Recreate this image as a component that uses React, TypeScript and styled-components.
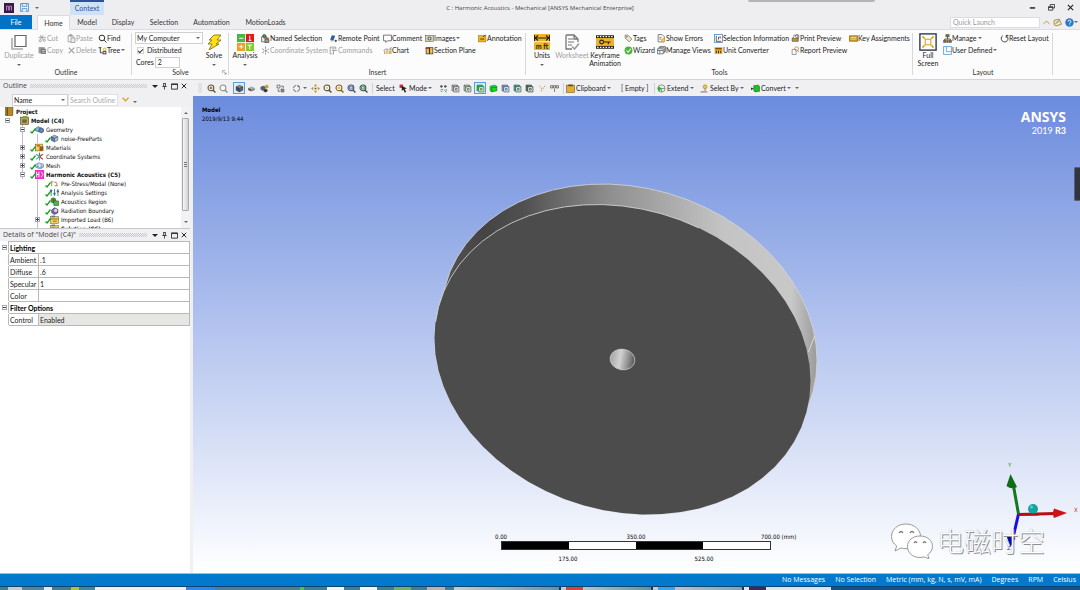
import React from "react";
import styled, { createGlobalStyle, css } from "styled-components";

const ui = `Lato, "Open Sans", sans-serif`;
const wide = `"Open Sans", "Noto Sans", sans-serif`;
const tahoma = `"DejaVu Sans Condensed", "Open Sans", sans-serif`;

const Global = createGlobalStyle`
  * { box-sizing: border-box; }
  body { margin: 0; background: #f0f0f3; font-family: ${ui}; font-size: 7px; line-height: 10px; color: #222; }
  button, input, select { font: inherit; color: inherit; margin: 0; padding: 0; border: 0; background: none; border-radius: 0; }
  table { border-collapse: collapse; }
`;

/* ---------- icons ---------- */

const gold = "#d9a520";
const cube = (top: string, left: string, right: string) => (
  <g stroke="#333" strokeWidth=".8">
    <path d="M2 5l6-3 6 3-6 3z" fill={top} />
    <path d="M2 5v6l6 3V8z" fill={left} />
    <path d="M14 5v6l-6 3V8z" fill={right} />
  </g>
);
const lens = (color: string, inner?: React.ReactNode) => (
  <g fill="none" stroke={color} strokeWidth="1.8">
    <circle cx="7" cy="7" r="5.2" fill="#fffbe8" />
    <path d="M11 11l4 4" strokeWidth="2.4" />
    {inner}
  </g>
);
const wire = (face: string, line = "#555") => (
  <g stroke={line} strokeWidth="1.4">
    <path d="M2 2h9v3H5v7H2z" fill={face} />
    <path d="M5 5h9v9H5z" fill="#fff" />
    <path d="M2 2l3 3M11 2l3 3M8 8h3v3H8z" fill="none" />
  </g>
);

const shapes: Record<string, React.ReactNode> = {
  duplicate: <g fill="none" stroke="#666"><path d="M1 4v11h11" stroke="#aaa" strokeWidth="1.6" /><path d="M4 1.5h11v11H4z" fill="#fff" strokeWidth="1.2" /></g>,
  cut: <g fill="none" stroke="#999" strokeWidth="1.5"><path d="M4 2l5 8M9 2L4 10M1 6h13" /><circle cx="4" cy="12" r="2" /><circle cx="11" cy="11" r="2" /></g>,
  copy: <g><rect x="1" y="2" width="11" height="11" fill="#999" /><path d="M5 5h9v9H5z" fill="#777" /><path d="M7 8h5M7 11h5" stroke="#fff" /></g>,
  paste: <g fill="none" stroke="#999" strokeWidth="1.5"><path d="M2 3h9v11H2zM5 1h3v3H5z" /><path d="M7 7h7v8H7z" fill="#eee" /></g>,
  del: <path d="M3 3l10 10M13 3L3 13" stroke="#999" strokeWidth="1.8" />,
  find: <g fill="none" stroke="#222" strokeWidth="1.7"><circle cx="7" cy="7" r="5" /><path d="M11 11l4 4" /></g>,
  tree: <g fill="none" stroke="#333" strokeWidth="1.6"><path d="M1 3h5M4 3v9h4" /><circle cx="12" cy="6" r="2.4" stroke={gold} /><rect x="9" y="10" width="5" height="4" /></g>,
  solve: <path d="M8 1h7l-4 5h4l-5 4h3L3 16l3-6H2l4-4H3z" fill="#ffe115" stroke="#8a7410" strokeWidth=".9" />,
  analysis: <g><rect width="7.6" height="7.6" fill="#49b648" /><rect x="8.4" width="7.6" height="7.6" fill="#e0191c" /><rect y="8.4" width="7.6" height="7.6" fill="#f0a01e" /><rect x="8.4" y="8.4" width="7.6" height="7.6" fill="#83cc2f" /><path d="M2 4h4M12 1.5v5M11 6h2.5M2 12h4M4 10v4M10 10.5h4M12 10.5v4" stroke="#fff" strokeWidth=".9" /></g>,
  named: <g stroke="#333" strokeWidth="1.1"><path d="M1 14V5l4-3 5 3v9z" fill="#e9efe9" /><circle cx="6" cy="4" r="3" fill="#3a9b48" /><path d="M7 8l7 2v5H7z" fill="#999" /><circle cx="12" cy="8" r="2" fill="#d33" stroke="none" /></g>,
  axes: <g stroke="#888" strokeWidth="1.6"><path d="M8 1v14M2 5l12 7M2 12l12-7" strokeDasharray="4 1.5" /></g>,
  axesColor: <g strokeWidth="2"><path d="M8 8V1" stroke="#2a9b35" /><path d="M8 8l6-4M8 8l6 5" stroke="#d22" /><path d="M8 8L2 4M8 8l-6 5M8 8v7" stroke="#4aa" /></g>,
  remote: <g><path d="M2 10L5 2l6 1-3 8z" fill="#2b5f9e" /><circle cx="12" cy="12" r="2" fill="#345" /><path d="M3 12h5" stroke="#345" /></g>,
  commands: <g fill="none" stroke="#999" strokeWidth="1.6"><path d="M2 2h10v4M2 2v12h4M5 5h5M5 8h3" /><path d="M8 8h6M8 8v7" /></g>,
  comment: <path d="M1 2h14v10H8l-3 3v-3H1z" fill="#fff" stroke="#555" strokeWidth="1.4" />,
  chart: <g><path d="M3 14V9M7 14V7M11 14V9M14 14V4" stroke="#c8963a" strokeWidth="2" /><path d="M1 8l5-3 4 2 5-5" fill="none" stroke="#555" strokeWidth="1.1" /></g>,
  images: <g><rect x="1" y="3" width="14" height="10" fill="#ddd1a0" stroke="#555" /><circle cx="8" cy="8" r="3.6" fill="#5f6b7c" /><circle cx="8" cy="8" r="1.6" fill="#dfe8f0" /></g>,
  section: <g><rect x="2" y="3" width="12" height="11" fill="#eac353" stroke="#333" strokeWidth="1.3" /><path d="M8 3v11" stroke="#333" strokeWidth="2" /><path d="M1 4h6" stroke="#c22" strokeWidth="2" /></g>,
  annotation: <g><rect x="1" y="3" width="13" height="11" fill="#f0b51c" stroke="#96700e" /><path d="M4 9h7M9 5l4-3" stroke="#333" strokeWidth="1.5" /></g>,
  units: <g><rect width="16" height="16" fill="#edb32c" /><path d="M1 4h14M4 1.500L1 4l3 2.500M12 1.500L15 4l-3 2.500M.5 1v6M15.500 1v6" fill="none" stroke="#2b2410" strokeWidth="1.100" /><path d="M0 7.800h16" stroke="#fff" strokeWidth=".8" /><text x="8" y="14.500" textAnchor="middle" fontSize="7" fontWeight="700" fill="#2b2410">m ft</text></g>,
  worksheet: <g fill="none" stroke="#777"><path d="M2 1h8l4 4v3M2 1v14h6M10 1v4h4" strokeWidth="1.3" /><path d="M4 5h5M4 8h6M4 11h4" strokeWidth="1.2" /><path d="M8 12.500l2.500 2.500L15 9.500" strokeWidth="1.6" stroke="#999" /></g>,
  keyframe: <g><rect y="2" width="16" height="12" fill="#2b2410" /><rect y="4.500" width="16" height="7" fill="#edb32c" /><path d="M1 3.200h14M1 12.800h14" stroke="#fff" strokeDasharray="1.300 1.200" strokeWidth="1" /><g fill="none" stroke="#2b2410" strokeWidth="1"><circle cx="5" cy="8" r="1.700" /><path d="M7 8h6M11 8v2" /></g></g>,
  tags: <g fill="#efe4c8" stroke="#666" strokeWidth="1.2"><path d="M2 2h5l7 7-5 5-7-7z" /><circle cx="5" cy="5" r="1" /></g>,
  wizard: <g><circle cx="8" cy="8" r="7" fill="#4db33f" /><path d="M4.500 8l3 3 4.500-6" fill="none" stroke="#fff" strokeWidth="1.800" /></g>,
  errors: <g fill="none" stroke="#555" strokeWidth="1.300"><path d="M2 1h7l4 4v9H2z" fill="#fff" /><path d="M4 6h4M4 9h3" /><circle cx="11" cy="11" r="3" fill="#f5c76b" stroke={gold} /></g>,
  views: <g fill="#fff" stroke="#555" strokeWidth="1.300"><path d="M5 1h10v9H5z" /><path d="M3 3h10v9H3z" /><path d="M1 5h10v9H1zM1 8h10M5 8v6" /></g>,
  info: <g><rect x="1" y="1" width="14" height="14" fill="#fff" stroke="#4d86c4" strokeWidth="1.400" /><path d="M4 3v10M4 13h9M8 5v5" stroke="#333" strokeWidth="1.400" /><circle cx="11" cy="6" r="1.800" fill="#d66" /></g>,
  converter: <g><rect x="1" y="2" width="14" height="12" fill="#edb32c" /><path d="M2 5h12M4 8v5M8 8v5M12 8v5" stroke="#4b3a08" strokeWidth="1.800" /></g>,
  print: <g><path d="M2 7h11v6H2z" fill="#b69349" stroke="#554116" /><path d="M5 7V2h7v5" fill="#fff" stroke="#555" /><circle cx="11" cy="4" r="3" fill="none" stroke="#333" /></g>,
  report: <g fill="none" stroke="#777" strokeWidth="1.300"><path d="M2 6h7v9H2z" fill="#fff" /><circle cx="10" cy="5" r="3.400" stroke="#b08030" /><path d="M12 8l2 3" /></g>,
  keys: <g><rect x="0" y="3" width="16" height="10" rx="1" fill="#c99a25" stroke="#6f5511" /><path d="M3 6h10M3 9h10" stroke="#f7e3a2" strokeWidth="1.500" /></g>,
  full: <g fill="none"><rect x=".8" y=".8" width="14.400" height="14.400" fill="#fff" stroke="#26334a" strokeWidth="1.200" /><rect x="5.500" y="5.500" width="5" height="5" stroke={gold} strokeWidth="1" /><path d="M5 5L3 3M11 5l2-2M5 11l-2 2M11 11l2 2" stroke={gold} strokeWidth="1.300" /></g>,
  manage: <g><path d="M8 5v4M3 12V9h10v3" stroke="#333" strokeWidth="1.400" fill="none" /><path d="M5 1h6v4H5zM1 11h4v4H1zM6.500 11h3v4h-3zM11 11h4v4h-4z" fill="#8a6a28" stroke="#333" strokeWidth=".8" /></g>,
  user: <g fill="#fff" stroke="#4b95d6" strokeWidth="1.400"><path d="M1 1h14v14H1z" /><path d="M6 1v9h9" /></g>,
  reset: <g fill="none" stroke="#333" strokeWidth="1.600"><path d="M5 3a6 6 0 1 0 6-.2" /><path d="M11 7V2.500h4" /></g>,
  zoomIn: lens("#5d5234", <path d="M4.500 7h5M7 4.500v5" />),
  zoomOut: lens("#8c8c8c"),
  zoomFit: lens("#4f4a30", <path d="M5 7h4" stroke={gold} />),
  zoomBox: lens("#7a6420", <path d="M4.500 7h5M7 4.500v5" stroke={gold} />),
  zoomBlue: lens("#3f5068", <path d="M4.500 5h5v4h-5z" stroke="#5577aa" />),
  zoomGreen: lens("#35564a", <path d="M4.500 5h5v4h-5z" stroke="#4a8a6a" />),
  cubeDark: cube("#7d868e", "#3f464c", "#5d656c"),
  cubeFlat: <g><path d="M2 7l6-2.500L14 7l-6 2.500z" fill="#aaa" /><path d="M2 7v3.500l6 3V9.500z" fill="#555" /><path d="M14 7v3.500l-6 3V9.500z" fill="#888" /></g>,
  cubes: <g><path d="M1 5l5-2 4 2v5l-5 2-4-2z" fill="#54606a" /><path d="M8 3l4-2 3 2v4l-4 1z" fill="#c79f36" /><path d="M7 10l5-1 2 3-4 3-4-2z" fill="#333" /></g>,
  boxes: <g fill="#fff" stroke="#555" strokeWidth="1.400"><path d="M2 2h5v5H2z" /><path d="M9 9h5v5H9z" fill="#999" /><path d="M9 4h4v3M4 9v4h3" fill="none" /></g>,
  rotate: <g fill="none" stroke="#555" strokeWidth="1.500"><circle cx="8" cy="8" r="5.500" strokeDasharray="7 1.800" /><path d="M12 2l2 3-4 0z" fill="#555" stroke="none" /></g>,
  pan: <g fill="#c49318"><path d="M8 0l3 4H5zM8 16l3-4H5zM0 8l4-3v6zM16 8l-4-3v6z" /><rect x="6.500" y="6.500" width="3" height="3" fill="#555" /></g>,
  arrow: <g><path d="M1 1h6v6H1z" fill="#d22" /><path d="M5 3l9 5-4 1 3 5-3 1-2-5-3 2z" fill="#222" /></g>,
  filter: <g fill="none" strokeWidth="1.500"><path d="M2 4h5M9 4h5M4 2v5M11 2v5" stroke="#333" /><path d="M3 10h4M3 13h3M9 10l4 5M13 9v3" stroke="#3a9b48" /></g>,
  wire: wire("#ddd"),
  wireGreen: wire("#cfeccf", "#4d604d"),
  wireSel: wire("#1ed12d", "#267a2c"),
  solidGreen: <g><path d="M2 4l8-2 4 2v8l-9 2-3-2z" fill="#13dd1c" stroke="#0b6d10" /><path d="M5 6h9M5 6v8" stroke="#0b6d10" /></g>,
  wireBlue: wire("#9cb7dd", "#3f5c80"),
  wireTeal: wire("#49b8a0", "#2c5e57"),
  wireDark: wire("#5b8a6a", "#2f4438"),
  probe: <g fill="none" stroke="#b89a52" strokeWidth="1.600" strokeDasharray="3 1.500"><path d="M2 3l4 4v6M13 3L9 7v4" /></g>,
  labels: <g fill="none" stroke="#6b6248" strokeWidth="1.500"><path d="M1 3h4v4H1zM6 3h4v4H6zM11 3h4v4h-4zM8 9v5" /></g>,
  clipboard: <g><rect x="1" y="2" width="14" height="13" fill="#e5ae33" stroke="#6d5112" /><rect x="4" y="1" width="8" height="3" fill="#5b4a22" /></g>,
  extend: <g><circle cx="8" cy="8" r="6.500" fill="#dff0df" stroke="#555" /><path d="M8 8L3 4a6.500 6.500 0 0 0 1 9z" fill="#1fb52a" /><path d="M8 8h6M8 8v6" stroke="#555" /></g>,
  selectBy: <g><circle cx="9" cy="5" r="3.500" fill="#f2c33c" stroke="#a07c18" /><path d="M9 8v4M1 14h12" stroke="#888" strokeWidth="2" /></g>,
  convert: <g><path d="M5 3l8-1 2 2v9l-8 1-2-2z" fill="#17c421" stroke="#0d5f12" /><path d="M0 6l5 2-5 3z" fill="#333" /></g>,
  save: <g fill="#eaf3fc" stroke="#3b87c9" strokeWidth="1.400"><path d="M1 1h14v14H1z" /><path d="M4 1h8v5H4zM4 15v-5h8v5" /></g>,
  logo: <g><rect width="16" height="16" fill="#3b1846" /><path d="M4 12V5h3v7M9 12V5h3v7" stroke="#c79ad2" strokeWidth="1.300" fill="none" /></g>,
  pin: <path d="M5 1h6M6 1v7M10 1v7M3 8h10M8 8v7" stroke="#222" strokeWidth="1.800" fill="none" />,
  max: <path d="M1 2h14v12H1zM1 3.500h14" stroke="#222" strokeWidth="2" fill="none" />,
  close: <path d="M2 2l12 12M14 2L2 14" stroke="#222" strokeWidth="2.600" />,
  min: <path d="M2 9h12" stroke="#222" strokeWidth="3.400" />,
  restore: <g fill="none" stroke="#333" strokeWidth="2"><path d="M5 5V1h10v8h-4" /><path d="M1 6h10v8H1zM1 8h10" /></g>,
  up: <path d="M1 11l7-6 7 6" stroke="#c4903a" strokeWidth="2.200" fill="none" />,
  down: <path d="M1 4l7 7 7-7" stroke={gold} strokeWidth="3" fill="none" />,
  note: <g><path d="M2 4l9-2 4 9-9 3-4-2z" fill="#f0e6c0" stroke="#9a7a28" strokeWidth="1.400" /><path d="M5 10l6-6" stroke="#555" strokeWidth="1.600" /></g>,
  help: <g><circle cx="8" cy="8" r="7.500" fill="#2577cf" /><path d="M5.500 6.500a2.500 2.500 0 1 1 3 2.300V10M8.500 11.500v1.500" stroke="#fff" strokeWidth="1.700" fill="none" /></g>,
  launcher: <path d="M2 10V2h8M7 7l6 6M13 8v5H8" stroke="#666" strokeWidth="1.800" fill="none" />,
  project: <g><rect x="1" y="1" width="13" height="14" fill="#b98a22" stroke="#5e430c" /><path d="M4 1v14" stroke="#5e430c" strokeWidth="2" /></g>,
  model: <g><rect x="1" y="2" width="14" height="13" fill="#b9a75a" stroke="#3d3718" /><path d="M4 6h8v6H4z" fill="#6a6450" /><path d="M5 1h7v3" stroke="#8aa840" strokeWidth="2" fill="none" /></g>,
  geometry: <g stroke="#2d4d74" strokeWidth="1.200"><path d="M1 6l5-3 4 2v5l-4 2-5-2z" fill="#8fb4d8" /><path d="M7 7l4-2 4 2v5l-4 2-4-2z" fill="#5d86b5" /></g>,
  part: cube("#8fb4d8", "#5b7fb4", "#a9c4e4"),
  materials: <g><rect x="1" y="2" width="12" height="12" fill="#f5d04c" stroke="#6d5112" /><path d="M8 6h7v8H8z" fill="#8a5a2a" /><path d="M3 5h6" stroke="#c33" strokeWidth="2" /></g>,
  mesh: <g fill="#d7e6f2" stroke="#48749c" strokeWidth="1.100"><path d="M1 6l6-3 8 3v5l-6 3-8-3zM1 8.500l8 3 6-3M5 4v8M11 5v8" /></g>,
  harmonic: <g><rect width="16" height="16" fill="#ee2cc8" /><path d="M3 3v10M7 3v10M3 8h4M11 3l3 5-3 5" stroke="#fff" strokeWidth="1.600" fill="none" /></g>,
  prestress: <path d="M1 5h5M3 5v8M8 6h3M8 12h6M12 6v6" stroke="#b78b5c" strokeWidth="1.800" fill="none" />,
  settings: <g strokeWidth="1.700"><path d="M2 2v12M8 2v12M14 2v12" stroke="#386" /><path d="M0 5h4M6 10h4M12 6h4" stroke="#36a" strokeWidth="3" /></g>,
  region: <g><circle cx="6" cy="6" r="5" fill="#3b9a3f" /><path d="M6 7h9v8H7z" fill="#48b84e" stroke="#174f1a" /><circle cx="6" cy="5" r="2" fill="#c33" /></g>,
  radiation: <g><path d="M3 7l5-4 6 3v6l-6 3-5-3z" fill="#73649c" stroke="#2f2850" /><circle cx="10" cy="8" r="3" fill="#d6cfe8" /></g>,
  load: <g><rect x="1" y="3" width="14" height="12" fill="#f2d568" stroke="#7a6118" /><path d="M1 7h14M5 11h7" stroke="#7a6118" strokeWidth="1.500" /><path d="M3 1h6v3H3z" fill="#57a" /></g>,
};

const Icon = ({ name, size = 9 }: { name: string; size?: number }) => (
  <svg width={size} height={size} viewBox="0 0 16 16" aria-hidden="true">{shapes[name]}</svg>
);

const Caret = styled.i<{ $big?: boolean }>`
  display: inline-block; flex: none;
  border: ${p => (p.$big ? 3 : 2)}px solid transparent;
  border-top-color: ${p => (p.$big ? "#222" : "#666")}; border-bottom: 0;
`;

/* ---------- title bar and tabs ---------- */

const Shell = styled.div`
  min-height: 100vh; display: flex; flex-direction: column; background: #f0f0f3; overflow: hidden;
  svg { flex: none; display: block; }
`;
const Title = styled.header`
  height: 15px; display: grid; grid-template-columns: 1fr auto 1fr; align-items: center; background: #eeeef1;
`;
const TitleLeft = styled.div`display: flex; align-items: center; align-self: stretch; gap: 6px; padding-left: 4px;`;
const ContextTab = styled.div`
  align-self: stretch; width: 34px; margin-left: 25px; border-top: 2px solid #2f5496;
  background: #cfe1f7; color: #2b579a; text-align: center; line-height: 13px;
`;
const TitleText = styled.h1`margin: 0; font: 400 6px/10px ${wide}; color: #444;`;
const TitleRight = styled.div`display: flex; justify-content: flex-end; gap: 12px; padding-right: 6px;`;
const Peek = styled.div`
  position: absolute; top: 0; right: 205px; width: 127px; height: 2px; background: #b4b4b6; border-radius: 0 0 2px 2px;
`;
const IconButton = styled.button`display: flex; align-items: center; justify-content: center;`;

const TabRow = styled.nav`height: 15px; display: flex; align-items: stretch; background: #eeeef1; border-bottom: 1px solid #dcdce0;`;
const Tab = styled.button<{ $w: number; $kind?: "file" | "active" }>`
  width: ${p => p.$w}px; color: #333; line-height: 14px;
  ${p => p.$kind === "file" && css`background: #0173c7; color: #fff; margin-right: 5px;`}
  ${p => p.$kind === "active" && css`background: #fcfcfc; border: 1px solid #dcdce0; border-bottom: 0; line-height: 13px; margin-bottom: -1px;`}
`;
const TabTools = styled.div`margin-left: auto; display: flex; align-items: center; gap: 3px; padding-right: 2px;`;
const Quick = styled.input`
  width: 90px; height: 11px; background: #fff; border: 1px solid #dcdce0; padding: 0 2px;
  &::placeholder { color: #999; opacity: 1; }
`;

/* ---------- ribbon ---------- */

const Ribbon = styled.section`height: 50px; display: flex; background: #fcfcfc; border-bottom: 1px solid #d4d4d8;`;
const GroupBox = styled.div<{ $w: number }>`
  width: ${p => p.$w}px; flex: none; display: flex; flex-direction: column; padding-top: 2px;
  background: linear-gradient(#d8d8dc, #d8d8dc) right 3px / 1px 42px no-repeat;
`;
const GroupBody = styled.div<{ $cols: string }>`height: 36px; display: grid; grid-template-columns: ${p => p.$cols}; align-items: start;`;
const GroupLabel = styled.div`position: relative; text-align: center; line-height: 9px; color: #333;`;
const Launcher = styled.button`position: absolute; right: 2px; top: 2px;`;
const Stack = styled.div`display: flex; flex-direction: column; align-items: flex-start;`;
const Small = styled.button`
  height: 12px; display: flex; align-items: center; white-space: nowrap; color: #222;
  &:disabled { color: #a0a0a0; }
  ${Caret} { margin-left: 1px; }
`;
const Big = styled.button`
  display: flex; flex-direction: column; align-items: center; justify-self: center; padding-top: 1px;
  line-height: 8px; white-space: nowrap; color: #222;
  &:disabled { color: #a0a0a0; }
  ${Caret} { margin-top: 5px; }
`;
const BigIcon = styled.span`height: 18px; display: flex; align-items: center;`;

type Item = [icon: string, text: string, drop?: boolean, off?: boolean];
const Items = ({ list }: { list: Item[] }) => (
  <Stack>
    {list.map(([icon, text, drop, off]) => (
      <Small key={text} disabled={off}><Icon name={icon} />{text}{drop && <Caret />}</Small>
    ))}
  </Stack>
);
const BigButton = ({ icon, size, lines, drop, off }: { icon: string; size: number; lines: string[]; drop?: boolean; off?: boolean }) => (
  <Big disabled={off}>
    <BigIcon><Icon name={icon} size={size} /></BigIcon>
    <span>{lines.map(l => <div key={l}>{l}</div>)}</span>
    {drop && <Caret />}
  </Big>
);
const Group = ({ w, cols, label, children, launcher }: { w: number; cols: string; label: string; children: React.ReactNode; launcher?: boolean }) => (
  <GroupBox $w={w}>
    <GroupBody $cols={cols}>{children}</GroupBody>
    <GroupLabel>{label}{launcher && <Launcher aria-label="More solve options"><Icon name="launcher" size={5} /></Launcher>}</GroupLabel>
  </GroupBox>
);

const SelectBox = styled.span<{ $w: number }>`
  width: ${p => p.$w}px; height: 12px; display: flex; align-items: center; padding-right: 2px;
  background: #fff; border: 1px solid #d0d0d4;
  select { flex: 1; appearance: none; padding-left: 1px; height: 10px; min-width: 0; line-height: 10px; }
`;
const Check = styled.label`
  height: 12px; display: flex; align-items: center; gap: 3px; padding-left: 2px;
  input { appearance: none; width: 7px; height: 7px; border: 1px solid #d4d4d8; background: #fff; display: grid; place-items: center; }
  input:checked::after { content: ""; width: 4px; height: 2px; border: solid #333; border-width: 0 0 1px 1px; transform: rotate(-45deg); }
`;
const Cores = styled.label`
  height: 12px; display: flex; align-items: center; gap: 1px; padding-left: 1px;
  input { width: 25px; height: 11px; border: 1px solid #d0d0d4; background: #fff; padding-left: 2px; }
`;

/* ---------- side panels ---------- */

const Body = styled.main`flex: 1; display: flex; min-height: 0;`;
const Side = styled.aside`width: 190px; flex: none; display: flex; flex-direction: column; margin-right: 3px; background: #fff;`;
const PanelHead = styled.div`
  height: 12px; display: flex; align-items: center; gap: 3px; padding: 0 3px; background: #f0f0f3; color: #444;
  h2 { margin: 0; font: 400 7px/10px ${wide}; }
`;
const Dots = styled.span`
  flex: 1; height: 4px; margin-right: 2px;
  background: conic-gradient(#c8c8ce 25%, transparent 0 50%, #c8c8ce 0 75%, transparent 0) 0 0 / 2px 2px;
`;
const HeadTools = styled.span`display: flex; align-items: center; gap: 3px;`;
const Filter = styled.div`
  height: 15px; display: flex; align-items: center; padding-left: 12px; background: #f0f0f3;
  input { width: 50px; height: 12px; background: #fff; border: 1px solid #e2e2e6; padding: 0 1px; margin-right: 4px; }
  input::placeholder { color: #aaa; opacity: 1; }
  > ${Caret} { margin: 5px 0 0 4px; }
`;
const TreeWrap = styled.div`height: 122px; display: flex; overflow: hidden; border-bottom: 1px solid #c8c8cc;`;
const TreeList = styled.ul`
  flex: 1; margin: 0; padding: 0; list-style: none; font: 6px/9px ${tahoma}; color: #111;
`;
const Row = styled.li<{ $bold?: boolean }>`
  height: 9px; display: flex; align-items: center; white-space: nowrap; font-weight: ${p => (p.$bold ? 700 : 400)};
`;
const Guide = styled.span<{ $line?: boolean }>`
  width: 15px; height: 9px; flex: none; display: grid; place-items: center;
  ${p => p.$line && css`background: linear-gradient(#c9b9c2, #c9b9c2) 7px 0 / 1px 9px no-repeat;`}
`;
const Expander = styled.button`
  width: 5px; height: 5px; border: 1px solid #a3a8b4; background: linear-gradient(#444, #444) center / 3px 1px no-repeat #fff;
`;
const Plus = styled(Expander)`
  background: linear-gradient(#444, #444) center / 3px 1px no-repeat, linear-gradient(#444, #444) center / 1px 3px no-repeat, #fff;
`;
const NodeIcon = styled.span`position: relative; width: 16px; height: 9px; flex: none; padding-left: 5px;`;
const Tick = styled.svg`position: absolute; left: 0; top: 3px;`;
const Scroll = styled.div`
  width: 9px; display: flex; flex-direction: column; align-items: center; background: #f2f2f4; padding: 5px 0;
`;
const Thumb = styled.div`
  width: 7px; height: 93px; margin: 4px 0 auto; display: grid; place-items: center;
  background: linear-gradient(90deg, #f6f6f6, #d2d2d6); border: 1px solid #a8a8ae; border-radius: 1px;
  &::after { content: ""; width: 3px; height: 5px; background: repeating-linear-gradient(#777 0 1px, transparent 1px 2px); }
`;
const UpCaret = styled(Caret)`transform: rotate(180deg);`;

const Props = styled.table`
  width: 100%; table-layout: fixed; background: #fff;
  td, th { height: 12px; padding: 0 0 0 1px; border: 1px solid #b9b9b9; font-weight: 400; text-align: left; line-height: 10px; }
  td:first-child { width: 8px; padding: 0; border-color: #fff #b9b9b9 #fff #fff; }
  th[scope="colgroup"] { font-weight: 700; color: #000; }
  ${Expander} { display: block; margin: auto; }
`;
const Cell = styled.td<{ $shade?: boolean }>`background: ${p => (p.$shade ? "#e6e6e3" : "#fff")};`;

const node = (level: number, icon: string, text: string, o: { box?: "+" | "-"; bold?: boolean; tick?: boolean; lines?: number[] } = {}) => ({ level, icon, text, ...o });
const nodes = [
  node(0, "model", "Model (C4)", { box: "-", bold: true }),
  node(1, "geometry", "Geometry", { box: "-", tick: true, lines: [1] }),
  node(2, "part", "noise-FreeParts", { tick: true, lines: [1, 2] }),
  node(1, "materials", "Materials", { box: "+", tick: true, lines: [1] }),
  node(1, "axesColor", "Coordinate Systems", { box: "+", tick: true, lines: [1] }),
  node(1, "mesh", "Mesh", { box: "+", tick: true, lines: [1] }),
  node(1, "harmonic", "Harmonic Acoustics (C5)", { box: "-", bold: true, tick: true, lines: [1] }),
  node(2, "prestress", "Pre-Stress/Modal (None)", { tick: true, lines: [2] }),
  node(2, "settings", "Analysis Settings", { tick: true, lines: [2] }),
  node(2, "region", "Acoustics Region", { tick: true, lines: [2] }),
  node(2, "radiation", "Radiation Boundary", { tick: true, lines: [2] }),
  node(2, "load", "Imported Load (B6)", { box: "+", tick: true, lines: [2] }),
  node(2, "load", "Solution (C6)", { bold: true, lines: [2] }),
];

const Head = ({ title }: { title: string }) => (
  <PanelHead>
    <h2>{title}</h2><Dots />
    <HeadTools>
      <IconButton aria-label="Panel menu"><Caret $big /></IconButton>
      <IconButton aria-label="Pin"><Icon name="pin" size={7} /></IconButton>
      <IconButton aria-label="Maximize"><Icon name="max" size={7} /></IconButton>
      <IconButton aria-label="Close"><Icon name="close" size={6} /></IconButton>
    </HeadTools>
  </PanelHead>
);

/* ---------- graphics area ---------- */

const Work = styled.section`flex: 1; min-width: 0; display: flex; flex-direction: column;`;
const Tools = styled.div`height: 16px; display: flex; align-items: center; padding-left: 5px; background: #f0f0f3;`;
const Grip = styled.span`
  width: 4px; height: 10px; margin-right: 3px;
  background: conic-gradient(#d2d2d8 25%, transparent 0 50%, #d2d2d8 0 75%, transparent 0) 0 0 / 2px 2px;
`;
const Tool = styled.button<{ $on?: boolean }>`
  width: 12px; height: 12px; display: grid; place-items: center;
  ${p => p.$on && css`border: 1px solid #5c9fdc; background: #dcebf8;`}
`;
const TextTool = styled.button<{ $w: number }>`
  width: ${p => p.$w}px; height: 12px; display: flex; align-items: center; gap: 1px; white-space: nowrap;
`;
const Gap = styled.span<{ $w: number; $rule?: boolean }>`
  width: ${p => p.$w}px; height: 11px; flex: none;
  ${p => p.$rule && css`background: linear-gradient(#d0d0d6, #d0d0d6) center / 1px 100% no-repeat;`}
`;
const View = styled.div`
  position: relative; flex: 1; overflow: hidden; background: linear-gradient(#6b8bdd, #b5c5ef 50%, #fff);
`;
const Scene = styled.svg`position: absolute; inset: 0; width: 100%; height: 100%;`;
const Stamp = styled.div`
  position: absolute; left: 9px; top: 9px; font: 6px/9px ${tahoma}; color: #000;
  b { display: block; }
`;
const Brand = styled.div`
  position: absolute; right: 14px; top: 13px; text-align: right; color: #fff; font: 9px/12px ${ui};
  strong { display: block; font: 700 14px/16px ${wide}; }
`;
const SideTab = styled.button`
  position: absolute; right: 0; top: 71px; width: 6px; height: 34px;
  background: #2f3542; border: 1px solid #59606e; border-right: 0; border-radius: 2px 0 0 2px;
`;
const Ruler = styled.div`
  position: absolute; right: 309px; bottom: 10px; width: 270px; font: 6px/9px ${tahoma}; color: #000;
`;
const Bar = styled.div`
  height: 9px; display: grid; grid-template-columns: repeat(4, 1fr); border: 1px solid #333; background: #fff;
  i:nth-child(odd) { background: #000; }
`;
const Marks = styled.div<{ $inset?: boolean }>`
  display: flex; justify-content: space-between; height: 9px; ${p => p.$inset && "margin: 4px 67px 0;"}
  span { width: 0; display: flex; justify-content: center; white-space: nowrap; }
  span:nth-child(3) { justify-content: flex-start; text-indent: -10px; }
`;
const TriadBox = styled.div`
  position: absolute; right: 0; bottom: 20px; width: 76px; height: 94px; font: 6px/8px ${tahoma};
`;
const Axis = styled.span<{ $c: string; $x: number; $y: number }>`
  position: absolute; left: ${p => p.$x}px; top: ${p => p.$y}px; color: ${p => p.$c};
`;
const Watermark = styled.div`
  position: absolute; right: 35px; bottom: 14px; display: flex; align-items: center; gap: 3px;
  color: #fff; font: 300 27px/36px "Noto Sans CJK SC", sans-serif; text-shadow: 1px 1px 0 #8f8f8f, 0 0 1px #aaa; white-space: nowrap;
`;

const W = 188, H = 155, R = 0.138, D = { x: 6.5, y: -20.5 }, C = { x: 622.5, y: 359.5 };
const rim = Array.from({ length: 60 }, (_, i) => {
  const t = (i / 60) * Math.PI * 2;
  const s = Math.sqrt(1 - R * R);
  return {
    x: C.x + W * Math.cos(t), y: C.y + H * (R * Math.cos(t) + s * Math.sin(t)),
    nx: H * (-R * Math.sin(t) + s * Math.cos(t)), ny: W * Math.sin(t),
  };
});
const pts = (a: { x: number; y: number }[]) => a.map(p => `${p.x.toFixed(1)},${p.y.toFixed(1)}`).join(" ");
const outline = rim.map(p => (p.nx * D.x + p.ny * D.y > 0 ? { x: p.x + D.x, y: p.y + D.y } : p));

const Disc = () => (
  <Scene viewBox="193 96 887 477" role="img" aria-label="Disc with a central hole">
    <defs>
      <linearGradient id="side" gradientUnits="userSpaceOnUse" x1="440" y1="0" x2="818" y2="0">
        <stop offset="0" stopColor="#555" /><stop offset=".12" stopColor="#444" /><stop offset=".22" stopColor="#505050" />
        <stop offset=".45" stopColor="#8f8f8f" /><stop offset=".75" stopColor="#c4c4c4" /><stop offset=".93" stopColor="#c8c8c8" /><stop offset="1" stopColor="#999" />
      </linearGradient>
      <linearGradient id="bore"><stop offset="0" stopColor="#a5a5a5" /><stop offset=".4" stopColor="#d2d2d2" /><stop offset=".75" stopColor="#8b8b8b" /><stop offset="1" stopColor="#555" /></linearGradient>
    </defs>
    <polygon points={pts(outline)} fill="url(#side)" stroke="#d5d5d5" strokeWidth=".8" />
    <path d="M808.500 352l6-16" stroke="#e4e4e4" strokeWidth=".8" />
    <polygon points={pts(rim)} fill="#4c4c4c" />
    <polyline points={pts(rim.slice(31, 50))} fill="none" stroke="#dedede" strokeWidth=".8" />
    <ellipse cx="622.500" cy="359.500" rx="12.500" ry="10.300" transform="rotate(10 622.5 359.5)" fill="url(#bore)" stroke="#ccc" strokeWidth=".7" />
  </Scene>
);

const Triad = () => (
  <TriadBox>
    <svg width="76" height="94" viewBox="1004 459 76 94">
      <path d="M1018.500 514l-6 26" stroke="#1111e0" strokeWidth="3" /><path d="M1006.500 536l9 2-5 9z" fill="#0b0ba0" />
      <path d="M1018.500 514l-5-28" stroke="#117a18" strokeWidth="3" /><path d="M1010.500 474l-4 12q5 4 10.500 1z" fill="#0e6d15" />
      <path d="M1018.500 514.500l37-1" stroke="#b80d10" strokeWidth="3" /><path d="M1054 508.500q-2 5 0 9.500l13-5z" fill="#cf1216" />
      <circle cx="1033" cy="509" r="5" fill="#12a3a3" /><circle cx="1031.500" cy="507" r="1.500" fill="#5cd0d0" />
      <path d="M1019 514.500h20" stroke="#b80d10" strokeWidth="2" />
    </svg>
    <Axis $c="#169c2c" $x={4} $y={2}>Y</Axis><Axis $c="#d23" $x={70} $y={47}>X</Axis><Axis $c="#22e" $x={3} $y={85}>Z</Axis>
  </TriadBox>
);

const Bubbles = () => (
  <svg width="44" height="36" viewBox="0 0 44 36">
    <g fill="#fff" stroke="#999" strokeWidth="1">
      <path d="M16 1C7.500 1 1.500 6.500 1.500 13.500c0 4 2 7.300 5.200 9.500L5 28l6-3q2.500.7 5 .7c8.500 0 14.500-5.500 14.500-12.200S24.500 1 16 1z" />
      <path d="M30 13c-7.500 0-12.500 4.500-12.500 10.500S22.500 34.500 30 34.500q2.300 0 4.300-.6l4.700 2-1.300-4.200c2.800-2 4.800-4.900 4.800-8.200C42.500 17.500 37.500 13 30 13z" />
    </g>
    <g fill="none" stroke="#777" strokeWidth="1.300"><path d="M9 10q2-3 4 0M20 10q2-3 4 0M24 20q1.500-2.500 3 0M33 20q1.500-2.500 3 0" /></g>
  </svg>
);

/* ---------- bottom bars ---------- */

const Status = styled.footer`
  height: 13px; display: flex; justify-content: flex-end; align-items: center; gap: 10px; padding-right: 4px;
  background: #0279cc; border-top: 1px solid #8cc6ee; color: #fff; font-family: ${wide};
`;
const Taskbar = styled.div`height: 4px; display: flex; background: #14518a; border-top: 1px solid #0d4470;`;
const Slot = styled.span<{ $w: number; $bg: string }>`width: ${p => p.$w}px; flex: none; background: ${p => p.$bg};`;
const slots: [number, string][] = [
  [8, "#3f7f94"], [14, "#c5ccd0"], [22, "#4c879d"], [8, "#dfe8ec"], [19, "#3f7f94"], [8, "#a4cc2c"], [16, "#3f87a4"],
  [91, "#f0efed"], [29, "#2a86f0"], [85, "#4a7f96"], [4, "#4fbf5a"], [23, "#3d7f98"], [17, "#f4f6f6"], [16, "#3d7f98"], [17, "#f4f6f6"],
  [17, "#3d7f98"], [17, "#6fb35e"], [16, "#3d7f98"], [18, "#b9b4b0"], [9, "#3d7f98"],
  [105, "linear-gradient(90deg, #c5cdd2, #5b93b0)"], [2, "#15395a"], [5, "#c5cdd2"], [17, "#d9433f"], [68, "linear-gradient(90deg, #b5c5cc, #5b93a0)"],
  [2, "#15395a"], [5, "#c5cdd2"], [17, "#35a4ee"], [67, "linear-gradient(90deg, #b5c5cc, #7ba3b8)"], [2, "#15395a"], [5, "#e5e5e5"], [17, "#43265a"], [65, "#dde3e8"],
];

export default function App() {
  return (
    <Shell>
      <Global />
      <Title>
        <TitleLeft>
          <Icon name="logo" size={10} />
          <IconButton aria-label="Save"><Icon name="save" size={9} /></IconButton>
          <IconButton aria-label="Customize"><Caret /></IconButton>
          <ContextTab>Context</ContextTab>
        </TitleLeft>
        <TitleText>C : Harmonic Acoustics - Mechanical [ANSYS Mechanical Enterprise]</TitleText>
        <TitleRight>
          <IconButton aria-label="Minimize"><Icon name="min" size={7} /></IconButton>
          <IconButton aria-label="Restore"><Icon name="restore" size={7} /></IconButton>
          <IconButton aria-label="Close window"><Icon name="close" size={7} /></IconButton>
        </TitleRight>
      </Title>
      <Peek />
      <TabRow>
        <Tab $w={32} $kind="file">File</Tab>
        <Tab $w={33} $kind="active">Home</Tab>
        <Tab $w={34}>Model</Tab>
        <Tab $w={38}>Display</Tab>
        <Tab $w={44}>Selection</Tab>
        <Tab $w={51}>Automation</Tab>
        <Tab $w={57}>MotionLoads</Tab>
        <TabTools>
          <Quick aria-label="Quick Launch" placeholder="Quick Launch" />
          <IconButton aria-label="Collapse ribbon"><Icon name="up" size={7} /></IconButton>
          <IconButton aria-label="Feedback"><Icon name="note" size={9} /></IconButton>
          <IconButton aria-label="Help"><Icon name="help" size={9} /><Caret /></IconButton>
        </TabTools>
      </TabRow>

      <Ribbon>
        <Group w={132} cols="38px 29px 31px 1fr" label="Outline">
          <BigButton icon="duplicate" size={16} lines={["Duplicate"]} drop off />
          <Items list={[["cut", "Cut", false, true], ["copy", "Copy", false, true]]} />
          <Items list={[["paste", "Paste", false, true], ["del", "Delete", false, true]]} />
          <Items list={[["find", "Find"], ["tree", "Tree", true]]} />
        </Group>
        <Group w={97} cols="3px 71px 16px 1fr" label="Solve" launcher>
          <span />
          <Stack>
            <SelectBox $w={68}><select aria-label="Solve target"><option>My Computer</option></select><Caret /></SelectBox>
            <Check><input type="checkbox" defaultChecked />Distributed</Check>
            <Cores>Cores <input defaultValue="2" /></Cores>
          </Stack>
          <BigButton icon="solve" size={16} lines={["Solve"]} drop />
        </Group>
        <Group w={297} cols="32px 68px 54px 42px 53px 1fr" label="Insert">
          <BigButton icon="analysis" size={17} lines={["Analysis"]} drop />
          <Items list={[["named", "Named Selection"], ["axes", "Coordinate System", false, true]]} />
          <Items list={[["remote", "Remote Point"], ["commands", "Commands", false, true]]} />
          <Items list={[["comment", "Comment"], ["chart", "Chart"]]} />
          <Items list={[["images", "Images", true], ["section", "Section Plane"]]} />
          <Items list={[["annotation", "Annotation"]]} />
        </Group>
        <Group w={387} cols="32px 28px 38px 33px 57px 77px 58px 1fr" label="Tools">
          <BigButton icon="units" size={16} lines={["Units"]} drop />
          <BigButton icon="worksheet" size={16} lines={["Worksheet"]} off />
          <BigButton icon="keyframe" size={18} lines={["Keyframe", "Animation"]} />
          <Items list={[["tags", "Tags"], ["wizard", "Wizard"]]} />
          <Items list={[["errors", "Show Errors"], ["views", "Manage Views"]]} />
          <Items list={[["info", "Selection Information"], ["converter", "Unit Converter"]]} />
          <Items list={[["print", "Print Preview"], ["report", "Report Preview"]]} />
          <Items list={[["keys", "Key Assignments"]]} />
        </Group>
        <Group w={140} cols="30px 57px 1fr" label="Layout">
          <BigButton icon="full" size={18} lines={["Full", "Screen"]} />
          <Items list={[["manage", "Manage", true], ["user", "User Defined", true]]} />
          <Items list={[["reset", "Reset Layout"]]} />
        </Group>
      </Ribbon>

      <Body>
        <Side>
          <Head title="Outline" />
          <Filter>
            <SelectBox $w={56}><select aria-label="Filter by"><option>Name</option></select><Caret /></SelectBox>
            <input aria-label="Search Outline" placeholder="Search Outline" />
            <IconButton aria-label="Expand search"><Icon name="down" size={7} /></IconButton>
            <Caret />
          </Filter>
          <TreeWrap>
            <TreeList>
              <Row $bold><NodeIcon><Icon name="project" /></NodeIcon>Project</Row>
              {nodes.map(n => (
                <Row key={n.text} $bold={n.bold}>
                  {Array.from({ length: n.level + 1 }, (_, i) => (
                    <Guide key={i} $line={n.lines?.includes(i)}>
                      {i === n.level && n.box === "-" && <Expander aria-label={`Collapse ${n.text}`} />}
                      {i === n.level && n.box === "+" && <Plus aria-label={`Expand ${n.text}`} />}
                    </Guide>
                  ))}
                  <NodeIcon>
                    {n.tick && <Tick width="6" height="6" viewBox="0 0 6 6"><path d="M.5 3.500L2 5l3.500-4.500" fill="none" stroke="#18a01c" strokeWidth="1.300" /></Tick>}
                    <Icon name={n.icon} />
                  </NodeIcon>
                  {n.text}
                </Row>
              ))}
            </TreeList>
            <Scroll><UpCaret /><Thumb /><Caret /></Scroll>
          </TreeWrap>
          <Head title={'Details of "Model (C4)"'} />
          <Props>
            <colgroup><col width="8" /><col width="30" /><col /></colgroup>
            <tbody>
              <tr><td><Expander aria-label="Collapse Lighting" /></td><th scope="colgroup" colSpan={2}>Lighting</th></tr>
              {[["Ambient", ".1"], ["Diffuse", ".6"], ["Specular", "1"], ["Color", ""]].map(([k, v]) => (
                <tr key={k}><td /><th scope="row">{k}</th><Cell>{v}</Cell></tr>
              ))}
              <tr><td><Expander aria-label="Collapse Filter Options" /></td><th scope="colgroup" colSpan={2}>Filter Options</th></tr>
              <tr><td /><th scope="row">Control</th><Cell $shade>Enabled</Cell></tr>
            </tbody>
          </Props>
        </Side>

        <Work>
          <Tools>
            <Grip />
            {["zoomIn", "zoomOut"].map(n => <Tool key={n} aria-label={n}><Icon name={n} /></Tool>)}
            <Gap $w={4} />
            <Tool $on aria-label="Shaded"><Icon name="cubeDark" /></Tool>
            <Tool aria-label="Wireframe"><Icon name="cubeFlat" /></Tool>
            <Gap $w={1} />
            <Tool aria-label="Thick shells"><Icon name="cubes" /></Tool>
            <Gap $w={4} />
            <Tool aria-label="Explode"><Icon name="boxes" /></Tool>
            <Gap $w={4} />
            <Tool aria-label="Rotate"><Icon name="rotate" /></Tool>
            <Gap $w={1} /><Caret /><Gap $w={2} />
            {["pan", "zoomFit", "zoomBox", "zoomBlue", "zoomGreen"].map(n => <Tool key={n} aria-label={n}><Icon name={n} /></Tool>)}
            <Gap $w={7} $rule />
            <TextTool $w={21}>Select</TextTool>
            <Tool aria-label="Select arrow"><Icon name="arrow" /></Tool>
            <TextTool $w={28}>Mode<Caret /></TextTool>
            {["filter", "wire", "wireGreen"].map(n => <Tool key={n} aria-label={n}><Icon name={n} /></Tool>)}
            <Gap $w={1} />
            <Tool $on aria-label="Face"><Icon name="wireSel" /></Tool>
            <Gap $w={1} />
            {["solidGreen", "wireBlue", "wireTeal", "wireDark"].map(n => <Tool key={n} aria-label={n}><Icon name={n} /></Tool>)}
            <Gap $w={1} />
            {["probe", "labels"].map(n => <Tool key={n} aria-label={n}><Icon name={n} /></Tool>)}
            <Gap $w={6} $rule />
            <TextTool $w={55}><Icon name="clipboard" />Clipboard<Caret /></TextTool>
            <TextTool $w={31}>[ Empty ]</TextTool>
            <Gap $w={5} $rule />
            <TextTool $w={43}><Icon name="extend" />Extend<Caret /></TextTool>
            <TextTool $w={51}><Icon name="selectBy" />Select By<Caret /></TextTool>
            <TextTool $w={44}><Icon name="convert" />Convert<Caret /></TextTool>
            <Caret />
          </Tools>
          <View>
            <Disc />
            <Stamp><b>Model</b>2019/9/13 9:44</Stamp>
            <Brand><strong>ANSYS</strong>2019 <b>R3</b></Brand>
            <SideTab aria-label="Open side panel" />
            <Ruler>
              <Marks><span>0.00</span><span>350.00</span><span>700.00 (mm)</span></Marks>
              <Bar><i /><i /><i /><i /></Bar>
              <Marks $inset><span>175.00</span><span>525.00</span></Marks>
            </Ruler>
            <Triad />
            <Watermark><Bubbles />电磁时空</Watermark>
          </View>
        </Work>
      </Body>

      <Status>
        <span>No Messages</span><span>No Selection</span><span>Metric (mm, kg, N, s, mV, mA)</span>
        <span>Degrees</span><span>RPM</span><span>Celsius</span>
      </Status>
      <Taskbar>{slots.map(([w, bg], i) => <Slot key={i} $w={w} $bg={bg} />)}</Taskbar>
    </Shell>
  );
}
